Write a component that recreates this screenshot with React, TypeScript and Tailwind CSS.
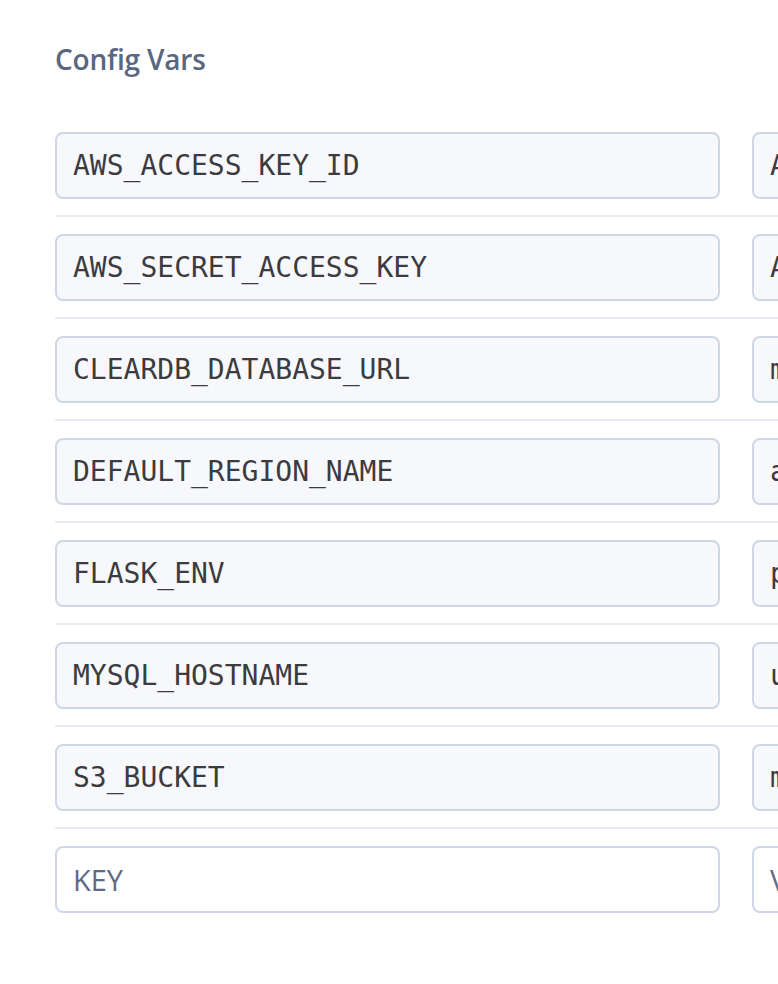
import React from "react";

const vars = [
  { key: "AWS_ACCESS_KEY_ID", value: "AKIAIOSFODNN7EXAMPLE" },
  { key: "AWS_SECRET_ACCESS_KEY", value: "A9wJalrXUtnFEMIK7MDENGbPxRfiCYEXAMPLEKEY" },
  { key: "CLEARDB_DATABASE_URL", value: "mysql://b1c2d3e4f5:a1b2c3d4@us-cdbr-east.cleardb.net/heroku_db" },
  { key: "DEFAULT_REGION_NAME", value: "ap-southeast-1" },
  { key: "FLASK_ENV", value: "production" },
  { key: "MYSQL_HOSTNAME", value: "us-cdbr-east-02.cleardb.com" },
  { key: "S3_BUCKET", value: "my-flask-app-bucket" },
];

const filled =
  "w-[665px] h-[67px] shrink-0 rounded-[8px] border-2 border-[#cfd7e6] bg-[#f7f8fb] pl-[16px] flex items-center text-[28px] text-[#3b3b40] font-['DejaVu_Sans_Mono',monospace] whitespace-nowrap overflow-hidden";
const empty =
  "w-[665px] h-[67px] shrink-0 rounded-[8px] border-2 border-[#cfd7e6] bg-white pl-[16px] flex items-center text-[29px] text-[#5f6b86] font-['Open_Sans',sans-serif]";

export default function App() {
  return (
    <main className="min-h-screen w-[778px] overflow-hidden bg-white pl-[55px] pt-[39px]">
      <h2 className="text-[28px] leading-[40px] font-semibold text-[#596780] font-['Open_Sans',sans-serif] tracking-[-0.2px]">
        Config Vars
      </h2>

      <div className="mt-[53px]">
        {vars.map((v) => (
          <div key={v.key} className="flex gap-[32px] border-b-2 border-[#e9ecf3] pb-[16px] mb-[17px] w-[1400px]">
            <div className={filled}>{v.key}</div>
            <div className={filled}>{v.value}</div>
          </div>
        ))}

        <div className="flex gap-[32px] w-[1400px]">
          <div className={empty}>KEY</div>
          <div className={empty}>VALUE</div>
        </div>
      </div>
    </main>
  );
}
